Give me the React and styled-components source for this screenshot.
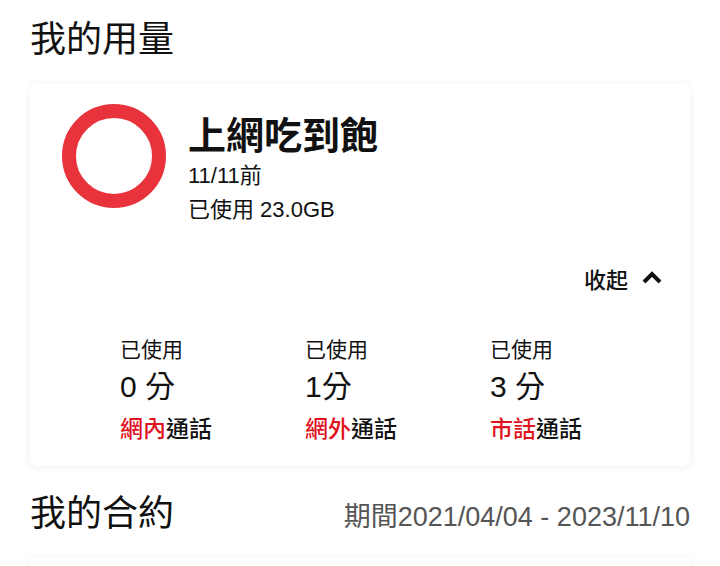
import React from "react";
import styled, { createGlobalStyle } from "styled-components";

const GlobalStyle = createGlobalStyle`
  html, body {
    margin: 0;
    padding: 0;
    background: #ffffff;
  }
  body {
    font-family: "Liberation Sans", "Noto Sans CJK TC", sans-serif;
    color: #111;
  }
`;

const Page = styled.div`
  width: 720px;
  height: 566px;
  overflow: hidden;
  padding: 0 30px;
  box-sizing: border-box;
`;

const SectionHead = styled.div`
  display: flex;
  align-items: baseline;
  justify-content: space-between;
  padding-top: ${(p) => p.top}px;
  height: ${(p) => p.h}px;
  box-sizing: border-box;
`;

const SectionTitle = styled.h2`
  margin: 0;
  font-size: 36px;
  font-weight: 400;
  line-height: 40px;
  color: #111;
`;

const Period = styled.span`
  font-size: 27px;
  color: #555;
  line-height: 40px;
`;

const Card = styled.div`
  background: #fff;
  border-radius: 8px;
  box-shadow: 0 1px 10px rgba(0, 0, 0, 0.07);
  padding: ${(p) => p.pad || "0"};
  box-sizing: border-box;
  height: ${(p) => p.h}px;
`;

const Top = styled.div`
  display: flex;
  align-items: flex-start;
  gap: 22px;
`;

const Ring = styled.div`
  width: 104px;
  height: 104px;
  border-radius: 50%;
  border: 14px solid #e8333c;
  box-sizing: border-box;
  flex-shrink: 0;
`;

const Info = styled.div`
  display: flex;
  flex-direction: column;
  padding-top: 9px;
`;

const PlanName = styled.div`
  font-size: 38px;
  font-weight: 700;
  line-height: 46px;
`;

const InfoLine = styled.div`
  font-size: 22px;
  line-height: 34px;
`;

const Toggle = styled.div`
  display: flex;
  justify-content: flex-end;
  align-items: center;
  gap: 14px;
  margin-top: 36px;
  padding-right: 28px;
  font-size: 22px;
  font-weight: 500;
  height: 30px;
`;

const Stats = styled.div`
  display: grid;
  grid-template-columns: repeat(3, 185px);
  padding-left: 58px;
  margin-top: 42px;
`;

const Stat = styled.div`
  display: flex;
  flex-direction: column;
`;

const StatLabel = styled.div`
  font-size: 21px;
  line-height: 30px;
`;

const StatValue = styled.div`
  font-size: 30px;
  line-height: 44px;
`;

const StatType = styled.div`
  font-size: 23px;
  line-height: 40px;
  font-weight: 500;
`;

const Red = styled.span`
  color: #e0141e;
`;

const stats = [
  { value: "0 分", red: "網內" },
  { value: "1分", red: "網外" },
  { value: "3 分", red: "市話" },
];

export default function App() {
  return (
    <>
      <GlobalStyle />
      <Page>
        <SectionHead top={20} h={84}>
          <SectionTitle>我的用量</SectionTitle>
        </SectionHead>
        <Card pad="20px 0 0 32px" h={382}>
          <Top>
            <Ring />
            <Info>
              <PlanName>上網吃到飽</PlanName>
              <InfoLine>11/11前</InfoLine>
              <InfoLine>已使用 23.0GB</InfoLine>
            </Info>
          </Top>
          <Toggle>
            收起
            <svg width="20" height="14" viewBox="0 0 20 14">
              <path d="M2 11 L10 3 L18 11" fill="none" stroke="#111" strokeWidth="4" />
            </svg>
          </Toggle>
          <Stats>
            {stats.map((s) => (
              <Stat key={s.red}>
                <StatLabel>已使用</StatLabel>
                <StatValue>{s.value}</StatValue>
                <StatType>
                  <Red>{s.red}</Red>通話
                </StatType>
              </Stat>
            ))}
          </Stats>
        </Card>
        <SectionHead top={28} h={92}>
          <SectionTitle>我的合約</SectionTitle>
          <Period>期間2021/04/04 - 2023/11/10</Period>
        </SectionHead>
        <Card h={60} />
      </Page>
    </>
  );
}
